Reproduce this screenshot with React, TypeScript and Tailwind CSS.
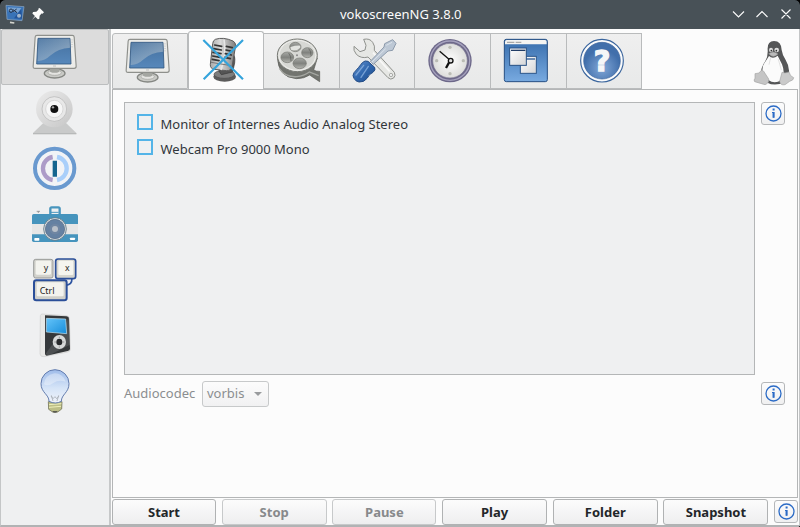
import type { ReactNode } from "react";

function Icon({ box, children }: { box: string; children: ReactNode }) {
  return (
    <svg viewBox={box} className="block h-11 w-11 shrink-0 overflow-visible" fill="none">
      {children}
    </svg>
  );
}

function Monitor({ box }: { box: string }) {
  return (
    <Icon box={box}>
      <defs>
        <linearGradient id="scr" x1="0" y1="0" x2="0" y2="1">
          <stop offset="0" stopColor="#44709f" />
          <stop offset="1" stopColor="#5788bb" />
        </linearGradient>
        <linearGradient id="glare" x1="0" y1="0" x2="1" y2="1">
          <stop offset="0" stopColor="#a4b6c6" stopOpacity=".2" />
          <stop offset="1" stopColor="#b0bfcb" stopOpacity=".75" />
        </linearGradient>
      </defs>
      <ellipse cx="164" cy="220" rx="31" ry="14" fill="#c9cac6" stroke="#858783" strokeWidth="4" />
      <ellipse cx="164" cy="218" rx="20" ry="8" fill="#e4e4e1" stroke="#a3a5a0" strokeWidth="2" />
      <path d="M150 204h28v11q-14 7-28 0z" fill="#a4a6a1" />
      <path d="M111 106h106q5 0 5.500 5l6 88q0 6-6 6H105q-6 0-5.500-6l6-88q.5-5 5.500-5z" fill="#ecece9" stroke="#8e908c" strokeWidth="3.500" />
      <path d="M114 115h96l3 77H110z" fill="url(#scr)" stroke="#31577f" strokeWidth="2.500" />
      <path d="M115 116h94l1 27q-36 2-58 23-19 18-39 17z" fill="url(#glare)" />
      <path d="M216 118v24" stroke="#aaa" strokeWidth="2" strokeDasharray="3 4" />
      <path d="M159 198h9" stroke="#aaa" strokeWidth="2" />
    </Icon>
  );
}

function Webcam() {
  return (
    <Icon box="99 273 132 132">
      <defs>
        <linearGradient id="wc" x1="0" y1="0" x2="1" y2="1">
          <stop offset="0" stopColor="#ececec" />
          <stop offset="1" stopColor="#c6c6c6" />
        </linearGradient>
      </defs>
      <path d="M130 369h68l31 30v4H99v-4z" fill="#c9caca" />
      <path d="M99 401h130" stroke="#b4b6b6" strokeWidth="3" />
      <circle cx="163" cy="327" r="55" fill="url(#wc)" />
      <circle cx="163" cy="327" r="37" fill="#e8e8e8" stroke="#b4b4b4" strokeWidth="2" />
      <circle cx="163" cy="327" r="26" fill="#f6f6f6" stroke="#cbcbcb" strokeWidth="2" />
      <circle cx="163" cy="327" r="12" fill="#111" />
      <circle cx="159" cy="322" r="3.5" fill="#aaa" />
    </Icon>
  );
}

function Magnifier() {
  return (
    <Icon box="99 18 132 132">
      <circle cx="164" cy="85" r="59" fill="#f1f3f6" stroke="#6999cf" strokeWidth="12" />
      <path d="M158 51a35 35 0 0 0 0 69" stroke="#ac9bc8" strokeWidth="13" />
      <path d="M171 51a35 35 0 0 1 0 69" stroke="#a9cffa" strokeWidth="13" />
      <path d="M158 62h13v48h-13z" fill="#13658f" />
    </Icon>
  );
}

function Camera() {
  return (
    <Icon box="99 186 132 132">
      <rect x="151" y="202" width="28" height="24" rx="4" fill="#eef0f1" stroke="#4895bd" strokeWidth="7" />
      <path d="M153 217h23" stroke="#4895bd" strokeWidth="3" />
      <path d="M110 214h10M115 214v5" stroke="#777" strokeWidth="2" />
      <rect x="96" y="222" width="138" height="84" rx="5" fill="#4694bd" />
      <path d="M96 252h138v31H96z" fill="#e6e6e6" />
      <rect x="103" y="294" width="15" height="8" rx="2" fill="#fff" />
      <rect x="210" y="293" width="15" height="7" rx="2" fill="#fff" />
      <circle cx="165" cy="267" r="34" fill="#e1e6e8" stroke="#5b7482" strokeWidth="2.5" />
      <circle cx="165" cy="267" r="29" fill="#6581a2" stroke="#4f6580" strokeWidth="2" />
      <circle cx="165" cy="267" r="16" fill="#7086a2" />
      <circle cx="165" cy="267" r="9" fill="#b9c0c9" />
    </Icon>
  );
}

function Keys() {
  return (
    <Icon box="99 24 132 132">
      <path d="M216 84c0 16-6 20-18 22" stroke="#2c53a0" strokeWidth="5" />
      <rect x="101" y="28" width="58" height="56" rx="6" fill="#d2d2cc" stroke="#8c8d8b" strokeWidth="2.5" />
      <rect x="107" y="32" width="46" height="42" rx="4" fill="#f3f3ee" />
      <rect x="167" y="27" width="60" height="59" rx="7" fill="#d6d6cf" stroke="#2b4f99" strokeWidth="5" />
      <rect x="175" y="32" width="45" height="43" rx="4" fill="#f5f5ef" />
      <rect x="102" y="91" width="98" height="60" rx="7" fill="#d0d0ca" stroke="#2b4f99" strokeWidth="6" />
      <rect x="110" y="97" width="81" height="42" rx="4" fill="#f3f3ee" />
      <text x="131" y="62" fontSize="26" fontFamily="Noto Sans, sans-serif" fill="#222">y</text>
      <text x="195" y="62" fontSize="26" fontFamily="Noto Sans, sans-serif" fill="#222">x</text>
      <text x="119" y="131" fontSize="27" fontFamily="Noto Sans, sans-serif" fill="#222">Ctrl</text>
    </Icon>
  );
}

function Player() {
  return (
    <Icon box="99 189 132 132">
      <defs>
        <linearGradient id="ps" x1="0" y1="0" x2="1" y2="1">
          <stop offset="0" stopColor="#64c4fa" />
          <stop offset="1" stopColor="#168cd9" />
        </linearGradient>
      </defs>
      <path d="M121 197q1-5 6-5l72 5q9 1 9 9l3 92q0 7-8 8l-71 14q-11 1-12-8z" fill="#e8e8e6" stroke="#cfcfcf" strokeWidth="2" />
      <path d="M135 196l65 3q7 1 7 7l3 90q0 6-7 7l-63 14q-5-1-5-6z" fill="#35383a" />
      <path d="M137 311l52-72 17-37 4 82-65 33z" fill="#a1a4a5" opacity=".22" />
      <path d="M139 205l58 2 3 44-61-5z" fill="url(#ps)" stroke="#c4e3ee" strokeWidth="2" />
      <ellipse cx="178" cy="276" rx="20" ry="21" fill="#d7d9d9" />
      <ellipse cx="178" cy="276" rx="9" ry="10" fill="#27292b" />
      <path d="M163 276h5M188 276h5M178 260v4M178 289v4" stroke="#777" strokeWidth="2" />
    </Icon>
  );
}

function Bulb() {
  return (
    <Icon box="99 357 132 132">
      <defs>
        <linearGradient id="bg" x1="0" y1="0" x2="0" y2="1">
          <stop offset="0" stopColor="#9ebbe9" />
          <stop offset=".55" stopColor="#d5e4f7" />
          <stop offset="1" stopColor="#f0f3fa" />
        </linearGradient>
      </defs>
      <path d="M145 455h41l-1 22-12 9h-15l-12-8z" fill="#bdbf87" stroke="#77785a" strokeWidth="2.500" />
      <path d="M147 464l37-3M147 472l36-3" stroke="#eff0bc" strokeWidth="3" />
      <path d="M157 483h16l-4 5h-8z" fill="#5a5a50" />
      <path d="M147 454c0-21-24-26-24-53a42 42 0 0 1 84 0c0 27-23 32-23 53q-18 10-37 0z" fill="url(#bg)" stroke="#627cae" strokeWidth="3" />
      <path d="M132 403a33 33 0 0 1 65-8q-22-7-37 4t-28 4z" fill="#fff" opacity=".33" />
      <path d="M159 453l-5-17M171 453l5-17M153 438l6 8 6-6 5 6 7-8" stroke="#a8aeb6" strokeWidth="2.500" />
    </Icon>
  );
}

function Microphone() {
  return (
    <Icon box="276 39 132 132">
      <defs>
        <linearGradient id="mic" x1="0" y1="0" x2="1" y2="0">
          <stop offset="0" stopColor="#aaa" />
          <stop offset=".4" stopColor="#dadada" />
          <stop offset="1" stopColor="#7d7d7d" />
        </linearGradient>
      </defs>
      <ellipse cx="344" cy="155" rx="34" ry="15" fill="#5b5b5b" />
      <ellipse cx="343" cy="148" rx="31" ry="12" fill="#7d7d7d" stroke="#4b4b4b" strokeWidth="2" />
      <path d="M366 84q11 6 8 30l-6 27-34 8-8-12 28-6z" fill="#555" stroke="#3a3a3a" strokeWidth="2" />
      <path d="M316 43q24-8 53 5 8 4 8 14l-11 63q-3 13-16 12l-37-4q-13-2-12-15l7-62q1-10 8-13z" fill="url(#mic)" stroke="#5c5c5c" strokeWidth="3" />
      <path d="M342 44q8 43-9 91" stroke="#e6e6e6" strokeWidth="5" />
      <path d="M314 60l21 4M311 71l23 4M309 82l24 4M308 93l22 4M307 103l20 4M349 64l18 4M348 75l18 4M346 86l18 4M344 97l17 4" stroke="#353535" strokeWidth="5" strokeLinecap="round" />
      <path d="M303 112l60 10" stroke="#777" strokeWidth="3" />
      <path d="M280 45l119 118M399 45L281 163" stroke="#35a4dc" strokeWidth="6.500" />
    </Icon>
  );
}

function Reel() {
  return (
    <Icon box="51 39 132 132">
      <defs>
        <linearGradient id="hole" x1="0" y1="0" x2="0" y2="1">
          <stop offset="0" stopColor="#a8aaa6" />
          <stop offset=".5" stopColor="#80827e" />
          <stop offset="1" stopColor="#b4b5b0" />
        </linearGradient>
      </defs>
      <path d="M52 95q2 62 57 66 24 0 40-11 14 10 30 20v-31q-10 1-18-4l11-36z" fill="#72746f" stroke="#565853" strokeWidth="2" />
      <path d="M58 130q17 27 52 25 22-2 38-14l28 11" stroke="#a5a7a2" strokeWidth="4" />
      <ellipse cx="112" cy="91" rx="60" ry="49" fill="#d7d8d4" stroke="#777974" strokeWidth="3" />
      <ellipse cx="112" cy="91" rx="55" ry="45" stroke="#efefec" strokeWidth="3" />
      <g fill="url(#hole)" stroke="#74766f" strokeWidth="2">
        <ellipse cx="106" cy="66" rx="17" ry="14" />
        <ellipse cx="82" cy="97" rx="19" ry="16" />
        <ellipse cx="142" cy="83" rx="17" ry="15" />
        <ellipse cx="119" cy="115" rx="20" ry="16" />
      </g>
      <path d="M91 66q17-5 30-4v6q-12 12-28 6z" fill="#e2e3df" />
      <path d="M86 84q7 8 7 24M146 71q7 5 7 21" stroke="#5a5c58" strokeWidth="2" />
      <circle cx="111" cy="91" r="3" fill="#888" />
    </Icon>
  );
}

function Tools() {
  return (
    <Icon box="276 39 132 132">
      <defs>
        <linearGradient id="hd" x1="0" y1="0" x2="1" y2="1">
          <stop offset="0" stopColor="#6795d1" />
          <stop offset=".5" stopColor="#3067ae" />
          <stop offset="1" stopColor="#204b89" />
        </linearGradient>
      </defs>
      <path d="M311 43q18-4 27 9 8 11 5 24l60 66q5 10-2 17-9 7-17-1l-60-62q-20 6-35-8-10-12-7-24l18 16 15-5 3-14z" fill="#e6e7e4" stroke="#8f918d" strokeWidth="3" strokeLinejoin="round" />
      <path d="M339 83l50 56" stroke="#f8f8f7" strokeWidth="5" />
      <circle cx="393" cy="150" r="5" fill="#eceded" stroke="#8f918d" strokeWidth="2" />
      <path d="M340 118l-9-9 41-43 2-10 24-12 10 11-10 21-14 2z" fill="#bdc8d5" stroke="#7d8da0" strokeWidth="2.5" strokeLinejoin="round" />
      <path d="M335 112l42-41M379 61l17-9" stroke="#e0e7ee" strokeWidth="2.500" />
      <path d="M307 113q8-8 17-4l20 18q4 8-5 15-12 5-17 17-10 14-25 12-11-2-15-11-6-8 0-17 14-15 25-30z" fill="url(#hd)" stroke="#244d86" strokeWidth="3" />
      <path d="M311 121l-23 29M325 124l-22 33" stroke="#9cc0ea" strokeWidth="4" strokeLinecap="round" opacity=".65" />
    </Icon>
  );
}

function Clock() {
  return (
    <Icon box="54 39 132 132">
      <defs>
        <radialGradient id="face">
          <stop offset="0" stopColor="#fff" />
          <stop offset="1" stopColor="#dddddb" />
        </radialGradient>
      </defs>
      <circle cx="120" cy="107" r="65" fill="#6d6889" />
      <circle cx="120" cy="107" r="59" stroke="#a5a1bd" strokeWidth="4" />
      <circle cx="120" cy="107" r="52" fill="url(#face)" stroke="#77728f" strokeWidth="2" />
      <g fill="#bbbcb5">
        <circle cx="120" cy="67" r="5" /><circle cx="120" cy="146" r="5" />
        <circle cx="80" cy="107" r="5" /><circle cx="160" cy="107" r="5" />
      </g>
      <path d="M117 103L89 79" stroke="#111" strokeWidth="4" />
      <path d="M117 113l-9 16" stroke="#111" strokeWidth="7" />
      <circle cx="122" cy="107" r="7" fill="#ddd" stroke="#111" strokeWidth="4" />
    </Icon>
  );
}

function Windows() {
  return (
    <Icon box="279 39 132 132">
      <defs>
        <linearGradient id="win" x1="0" y1="0" x2="0" y2="1">
          <stop offset="0" stopColor="#376dac" />
          <stop offset="1" stopColor="#78aae0" />
        </linearGradient>
        <linearGradient id="pg" x1="0" y1="0" x2="1" y2="1">
          <stop offset="0" stopColor="#fff" />
          <stop offset="1" stopColor="#d5d6d7" />
        </linearGradient>
      </defs>
      <rect x="283" y="43" width="129" height="127" rx="6" fill="url(#win)" stroke="#264f83" strokeWidth="3" />
      <path d="M285 58V50q0-5 5-5h115q5 0 5 5v8z" fill="#f4f4f2" />
      <path d="M291 52h22M317 52h17" stroke="#aaa" strokeWidth="4" />
      <rect x="331" y="94" width="48" height="51" fill="url(#pg)" stroke="#2b568a" strokeWidth="3" />
      <path d="M335 102h40" stroke="#2c5a95" strokeWidth="4" />
      <rect x="299" y="69" width="50" height="52" fill="url(#pg)" stroke="#264f83" strokeWidth="3" />
      <path d="M303 76h43" stroke="#203c65" strokeWidth="4" />
    </Icon>
  );
}

function Help() {
  return (
    <Icon box="60 39 132 132">
      <defs>
        <radialGradient id="hp" cx=".5" cy=".7">
          <stop offset="0" stopColor="#82a7d7" />
          <stop offset="1" stopColor="#416fab" />
        </radialGradient>
      </defs>
      <circle cx="126" cy="107" r="64" fill="#fafbfc" stroke="#3a659d" strokeWidth="3.500" />
      <circle cx="126" cy="107" r="55" fill="url(#hp)" stroke="#3c649b" strokeWidth="2" />
      <text x="126" y="139" textAnchor="middle" fontSize="86" fontWeight="700" fontFamily="DejaVu Sans, sans-serif" fill="#f5f6f8" stroke="#f5f6f8" strokeWidth="4">?</text>
    </Icon>
  );
}

function Tux() {
  return (
    <svg viewBox="159 117 126 141" className="h-[47px] w-[42px]" fill="none">
      <path d="M203 150q-2-27 19-27 22 0 23 27 2 15 12 30 12 19 10 39l-14 28q-29 13-51 1l-20-28q1-18 14-37 8-14 7-33z" fill="#555657" />
      <path d="M207 168q12 11 26-1l13 26q11 28-2 46-19 15-39 1-16-7-18-20-2-22 10-36z" fill="#fbfbfb" />
      <path d="M212 172l-5 22M235 178l9 32" stroke="#d4d4d4" strokeWidth="2" />
      <ellipse cx="213" cy="150" rx="6" ry="7" fill="#dedede" />
      <ellipse cx="230" cy="150" rx="7" ry="7" fill="#dedede" />
      <circle cx="214" cy="152" r="2.5" fill="#333" />
      <circle cx="229" cy="152" r="2.5" fill="#333" />
      <path d="M206 161q14-10 28 1-14 15-28-1z" fill="#bbb" stroke="#888" strokeWidth="1.5" />
      <path d="M165 221l12-2 7-8q8 0 11 9l11 17q2 13-11 17l-31-9q-4-5 1-10z" fill="#c5c5c5" stroke="#a5a5a5" strokeWidth="2" />
      <path d="M246 217q8 4 21-1l5 11 9 6q0 8-12 11l-14 10q-14 3-16-10z" fill="#cacaca" stroke="#a5a5a5" strokeWidth="2" />
    </svg>
  );
}

function InfoButton() {
  return (
    <button className="flex h-[23px] w-6 shrink-0 items-center justify-center rounded-[3px] border border-[#b5b7b9] bg-gradient-to-b from-[#fcfcfc] to-[#f0f0f1]">
      <svg viewBox="0 0 17 17" className="h-[17px] w-[17px]" fill="none">
        <circle cx="8.500" cy="8.500" r="7.500" stroke="#2b6bc6" strokeWidth="1.300" />
        <path d="M7 7.500h1.500v5" stroke="#2b6bc6" strokeWidth="1.200" />
        <path d="M8.600 7v5.700M7.600 4.500h2" stroke="#2b6bc6" strokeWidth="2" />
      </svg>
    </button>
  );
}

const sidebar = [
  { h: "h-[55px]", icon: <Webcam /> },
  { h: "h-14", icon: <Magnifier /> },
  { h: "h-14", icon: <Camera /> },
  { h: "h-[55px]", icon: <Keys /> },
  { h: "h-14", icon: <Player /> },
  { h: "h-14", icon: <Bulb /> },
];

const tabs = [
  { w: "w-[76px] pl-[13px]", icon: <Reel /> },
  { w: "w-[75px] pl-[12px]", icon: <Tools /> },
  { w: "w-[76px] pl-[13px]", icon: <Clock /> },
  { w: "w-[76px] pl-[12px]", icon: <Windows /> },
  { w: "w-[75px] pl-[13px]", icon: <Help /> },
];

const actions = [
  { label: "Start", w: "w-[104px]" },
  { label: "Stop", w: "w-[105px]", off: true },
  { label: "Pause", w: "w-[104px]", off: true },
  { label: "Play", w: "w-[105px]" },
  { label: "Folder", w: "w-[105px]" },
  { label: "Snapshot", w: "w-[105px]" },
];

const sources = ["Monitor of Internes Audio Analog Stereo", "Webcam Pro 9000 Mono"];

function TitleBar() {
  return (
    <header className="flex h-[29px] shrink-0 items-center rounded-t-[5px] bg-[#485157] pb-px text-[#fcfcfc]">
      <div className="flex w-[340px] shrink-0 items-center">
        <svg viewBox="12 9 96 63" className="ml-1 h-[21px] w-8" fill="none">
          <path d="M18 13l54 4-6 42-45-4z" fill="#3973b7" stroke="#8fa9c4" strokeWidth="2" />
          <path d="M24 19l40 2-10 14-29-4z" fill="#78a3d2" />
          <path d="M42 52l22-28 2 29z" fill="#22549a" />
          <circle cx="33" cy="29" r="5" stroke="#23324a" strokeWidth="3" />
          <path d="M39 32l11-8M39 26l12 9" stroke="#23324a" strokeWidth="3" />
          <circle cx="57" cy="44" r="6" fill="#a1b5ca" />
          <path d="M30 64l13 2" stroke="#d5d5ce" strokeWidth="5" />
        </svg>
        <svg viewBox="98 22 33 33" className="-ml-1 h-3 w-3" fill="#fcfcfc">
          <path d="M119 22l12 12-4 4-3-1-5 6-1 9-4 1-7-7-10 10 9-12-7-7 2-4 9-1 6-6-1-2z" />
        </svg>
      </div>
      <div className="w-[392px] text-[13px] leading-[18px]">vokoscreenNG 3.8.0</div>
      <svg viewBox="0 0 60 12" className="h-3 w-[60px]" fill="none" stroke="#fcfcfc" strokeWidth="1.1">
        <path d="M1 3.500l5.500 5.500L12 3.500M24.500 9L30 3.500 35.500 9M49.500 1.500l9 9M58.500 1.500l-9 9" />
      </svg>
    </header>
  );
}

export default function App() {
  return (
    <div className="h-[527px] w-[800px] bg-black font-['Noto_Sans',sans-serif] text-[13px] text-[#31363b]">
      <div className="flex h-full flex-col overflow-hidden rounded-t-[5px] rounded-br-[3px]">
        <TitleBar />
        <div className="flex min-h-0 flex-1 border-b-2 border-l border-r border-b-[#b1b3b4] border-l-[#c4c6c7] border-r-[#c4c6c7] bg-[#fcfcfc]">
          <aside className="w-[110px] shrink-0 border-r-2 border-[#c6c8c9] bg-[#eff0f1]">
            <div className="flex h-14 items-start rounded-[2px] border border-[#bcbebf] bg-[#dcdcdc] pl-[31px] pt-[5px]">
              <Monitor box="99 105 132 132" />
            </div>
            {sidebar.map((s, i) => (
              <div key={i} className={`flex items-start pl-8 pt-1.5 ${s.h}`}>{s.icon}</div>
            ))}
          </aside>
          <main className="flex min-w-0 flex-1 flex-col pl-px">
            <div className="flex h-[60px] shrink-0 items-end">
              <div className="flex h-14 w-[76px] items-start rounded-tl-[3px] border border-[#b9bbbc] bg-gradient-to-b from-[#efefef] to-[#e8e9e9] pl-[13px] pt-1">
                <Monitor box="99 102 132 132" />
              </div>
              <div className="-mb-px flex h-[59px] w-[76px] items-start self-end rounded-t-[3px] border border-b-0 border-[#b9bbbc] bg-[#fcfcfc] pl-[13px] pt-[6px]">
                <Microphone />
              </div>
              {tabs.map((t, i) => (
                <div key={i} className={`flex h-14 items-start border border-l-0 border-[#b9bbbc] bg-gradient-to-b from-[#efefef] to-[#e8e9e9] pt-1 ${t.w}`}>
                  {t.icon}
                </div>
              ))}
              <div className="mb-[3px] ml-auto mr-1"><Tux /></div>
            </div>
            <section className="mr-px h-[409px] shrink-0 border border-[#b4b6b7] pl-[11px] pt-3">
              <div className="flex">
                <div className="h-[273px] w-[631px] border border-[#b4b6b7] bg-[#eff0f1] pl-3 pt-[9px]">
                  {sources.map((name) => (
                    <label key={name} className="flex h-[25px] items-center gap-[7.500px]">
                      <span className="mb-[5px] h-4 w-4 border-2 border-[#53b4e8]" />
                      <span>{name}</span>
                    </label>
                  ))}
                </div>
                <div className="ml-1.5"><InfoButton /></div>
              </div>
              <div className="mt-[6px] flex items-center text-[#8b8e90]">
                <span className="w-[78px]">Audiocodec</span>
                <div className="flex h-[26px] w-[67px] items-center justify-between rounded-[3px] border border-[#c7c9ca] bg-gradient-to-b from-[#fcfcfc] to-[#f1f1f2] pl-1 pr-1.5">
                  <span>vorbis</span>
                  <svg viewBox="0 0 8 4" className="h-1 w-2" fill="#999b9d"><path d="M0 0h8L4 4z" /></svg>
                </div>
                <div className="mb-0.5 ml-[492px]"><InfoButton /></div>
              </div>
            </section>
            <div className="mt-px flex gap-[5.700px]">
              {actions.map((a) => (
                <button
                  key={a.label}
                  className={`h-[26px] shrink-0 rounded-[3px] border bg-gradient-to-b from-[#fcfcfc] to-[#eeeeef] font-bold leading-[18px] ${a.w} ${a.off ? "border-[#c7c9ca] text-[#87898b]" : "border-[#b0b2b3] text-[#232629]"}`}
                >
                  {a.label}
                </button>
              ))}
              <div className="mt-px"><InfoButton /></div>
            </div>
          </main>
        </div>
      </div>
    </div>
  );
}
